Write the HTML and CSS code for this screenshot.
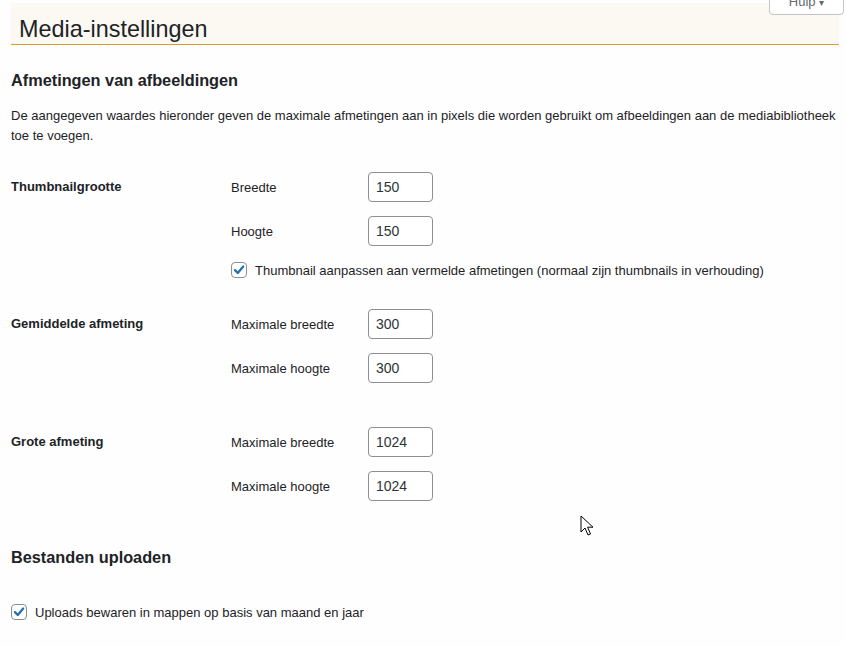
FILE: index.html
```html
<!DOCTYPE html>
<html lang="nl">
<head>
<meta charset="utf-8">
<title>Media-instellingen</title>
<link rel="stylesheet" href="styles.css">
</head>
<body>
<div class="wrap">
  <div class="page-header">
    <h1 class="page-title">Media-instellingen</h1>
    <button class="help-tab" type="button">Hulp <span class="caret">▾</span></button>
  </div>

  <h2 class="section-title first">Afmetingen van afbeeldingen</h2>
  <p class="intro">De aangegeven waardes hieronder geven de maximale afmetingen aan in pixels die worden gebruikt om afbeeldingen aan de mediabibliotheek toe te voegen.</p>

  <div class="form-row row-thumb">
    <div class="row-label">Thumbnailgrootte</div>
    <div class="row-fields">
      <div class="field"><span class="field-label">Breedte</span><input class="num" type="text" value="150"></div>
      <div class="field"><span class="field-label">Hoogte</span><input class="num" type="text" value="150"></div>
      <div class="check-line in-table">
        <span class="checkbox"><svg viewBox="0 0 16 16" width="16" height="16"><path d="M3.4 8.2 L6.6 11.4 L12.8 4" fill="none" stroke="#2271b1" stroke-width="2.6" stroke-linecap="round" stroke-linejoin="round"/></svg></span>
        <span>Thumbnail aanpassen aan vermelde afmetingen (normaal zijn thumbnails in verhouding)</span>
      </div>
    </div>
  </div>

  <div class="form-row row-medium">
    <div class="row-label">Gemiddelde afmeting</div>
    <div class="row-fields">
      <div class="field"><span class="field-label">Maximale breedte</span><input class="num" type="text" value="300"></div>
      <div class="field"><span class="field-label">Maximale hoogte</span><input class="num" type="text" value="300"></div>
    </div>
  </div>

  <div class="form-row row-large">
    <div class="row-label">Grote afmeting</div>
    <div class="row-fields">
      <div class="field"><span class="field-label">Maximale breedte</span><input class="num" type="text" value="1024"></div>
      <div class="field"><span class="field-label">Maximale hoogte</span><input class="num" type="text" value="1024"></div>
    </div>
  </div>

  <h2 class="section-title second">Bestanden uploaden</h2>

  <div class="check-line uploads">
    <span class="checkbox"><svg viewBox="0 0 16 16" width="16" height="16"><path d="M3.4 8.2 L6.6 11.4 L12.8 4" fill="none" stroke="#2271b1" stroke-width="2.6" stroke-linecap="round" stroke-linejoin="round"/></svg></span>
    <span>Uploads bewaren in mappen op basis van maand en jaar</span>
  </div>
</div>

<svg class="cursor" width="16" height="24" viewBox="0 0 16 24"><path d="M1 1 L1 17 L5 13 L8 20 L10.5 19 L7.6 12.2 L13 12.2 Z" fill="#fff" stroke="#000" stroke-width="1" stroke-linejoin="miter"/></svg>
</body>
</html>
```
FILE: styles.css
```css
html, body {
  margin: 0;
  padding: 0;
  background: #fefefe;
}
body {
  font-family: "Liberation Sans", Arial, sans-serif;
  font-size: 13px;
  color: #1d2327;
  position: relative;
  overflow: hidden;
  height: 646px;
}
.wrap {
  padding: 0 7px 0 11px;
}
.page-header {
  position: relative;
  margin-top: 3px;
  height: 41px;
  background: #fcf8f2;
  border-bottom: 1px solid #dc9a2e;
  padding-left: 8px;
  box-sizing: content-box;
}
.page-title {
  margin: 0;
  font-weight: 400;
  font-size: 23.4px;
  line-height: 30px;
  padding-top: 11px;
  color: #1d2327;
}
.help-tab {
  position: absolute;
  top: -21px;
  right: -5px;
  width: 75px;
  height: 33px;
  background: #fff;
  border: 1px solid #c3c4c7;
  border-radius: 0 0 4px 4px;
  font-family: inherit;
  font-size: 13px;
  color: #646970;
  padding: 5px 0 0 0;
  text-align: center;
}
.caret { font-size: 10px; }
.section-title {
  margin: 0;
  font-size: 16.3px;
  line-height: 24px;
  font-weight: 700;
  color: #1d2327;
}
.section-title.first { margin-top: 23px; }
.section-title.second { margin-top: 44px; }
.intro {
  margin: 14px 0 0 0;
  line-height: 20px;
}
.form-row {
  display: grid;
  grid-template-columns: 220px 1fr;
}
.row-thumb { margin-top: 26px; }
.row-medium { margin-top: 27px; }
.row-large { margin-top: 44px; }
.row-label {
  font-weight: 700;
  line-height: 29px;
}
.row-fields {
  display: flex;
  flex-direction: column;
  gap: 14px;
}
.field {
  display: flex;
  align-items: center;
  height: 30px;
}
.field-label {
  width: 137px;
}
.num {
  box-sizing: border-box;
  width: 65px;
  height: 30px;
  margin: 0;
  border: 1px solid #8c8f94;
  border-radius: 4px;
  padding: 0 7px;
  font-family: inherit;
  font-size: 14px;
  color: #2c3338;
  background: #fff;
}
.check-line {
  display: flex;
  align-items: center;
  height: 24px;
  gap: 8px;
}
.check-line.in-table { margin-top: -2px; }
.check-line.uploads { margin-top: 31px; }
.checkbox {
  box-sizing: border-box;
  width: 16px;
  height: 16px;
  border: 1px solid #8c8f94;
  border-radius: 4px;
  background: #fff;
  display: flex;
  align-items: center;
  justify-content: center;
  flex: none;
}
.checkbox svg { display: block; width: 14px; height: 14px; }
.cursor {
  position: absolute;
  left: 580px;
  top: 515px;
}
```
